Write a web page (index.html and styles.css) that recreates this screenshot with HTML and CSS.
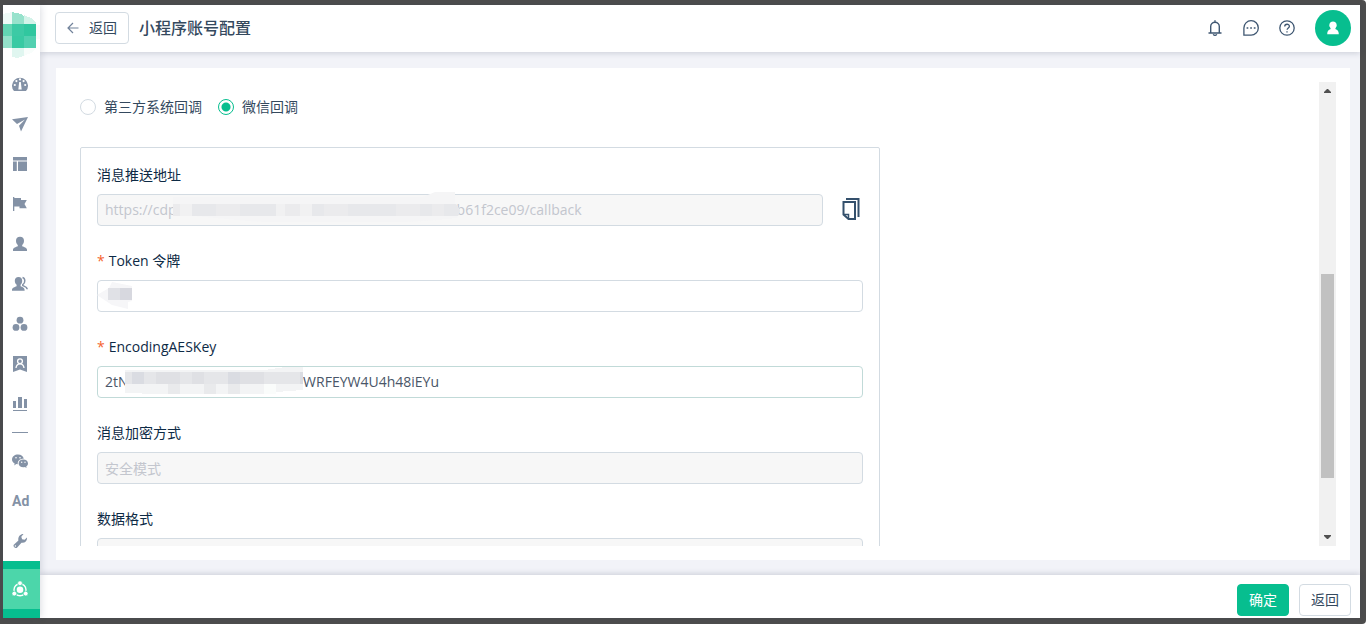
FILE: index.html
```
<!DOCTYPE html>
<html lang="zh-CN">
<head>
<meta charset="utf-8">
<meta name="viewport" content="width=device-width, initial-scale=1">
<title>小程序账号配置</title>
<link rel="stylesheet" href="styles.css">
</head>
<body>
<div class="app">
  <nav class="sidebar" aria-label="主导航">
    <a class="logo" href="#" aria-label="首页">
      <svg width="37" height="48" viewBox="0 0 37 48" shape-rendering="crispEdges">
        <path fill="#fafafa" d="M33 14h4v14h-4z"/>
        <path fill="#effaf7" d="M0 3L9 1v12H0z"/><path fill="#97e2cc" d="M9 1l9 2 3 2v8H9z"/><path fill="#d3f3e9" d="M21 4l7 3 5 4v2H21z"/>
        <path fill="#63d5b3" d="M0 13h9v12H0z"/><path fill="#3ccaa5" d="M9 13h12v12H9z"/><path fill="#30c79f" d="M21 13h12v12H21z"/>
        <path fill="#94e1ca" d="M0 25h9v12H0z"/><path fill="#38caa3" d="M9 25h12v12H9z"/><path fill="#52d0b0" d="M21 25h12v12H21z"/>
        <path fill="#e0f6f0" d="M9 37h12v8l-7 2-5-1z"/><path fill="#f8fdfb" d="M21 37h12l-5 5-7 3z"/>
      </svg>
    </a>
    <a class="nav-item" href="#" aria-label="仪表盘"><svg class="icon" viewBox="0 0 16 16"><path fill="currentColor" d="M2 15A8 8 0 1 1 14 15z"/><g fill="#fff"><path d="M7.2 6h1.6l.9 7.5H6.3z"/><circle cx="8" cy="3.4" r="1.1"/><circle cx="4.4" cy="5.1" r="1.1"/><circle cx="11.6" cy="5.1" r="1.1"/><circle cx="2.8" cy="9" r="1.1"/><circle cx="13.2" cy="9" r="1.1"/></g></svg></a>
    <a class="nav-item" href="#" aria-label="触达"><svg class="icon" viewBox="0 0 16 16"><path fill="currentColor" d="M0 3.200L16 1 9 15.400 7 9.700 13 3.600 5 8.100z"/></svg></a>
    <a class="nav-item" href="#" aria-label="页面"><svg class="icon" viewBox="0 0 16 16"><path fill="currentColor" d="M1 1h14v3.400H1zM1 5.600h3.800V15H1zM6 5.600h9V15H6z"/></svg></a>
    <a class="nav-item" href="#" aria-label="活动"><svg class="icon" viewBox="0 0 16 16"><path fill="currentColor" d="M1 1h1.300v1H9v2h5.800l-2.300 4 2.300 4.200H7.500v-1.800H2.300V15H1z"/></svg></a>
    <a class="nav-item" href="#" aria-label="用户"><svg class="icon" viewBox="0 0 16 16"><path fill="currentColor" d="M8 .8c2.500 0 4 1.600 4 4 0 2-.8 3.500-1.800 4.200v1.300c1.800.8 4.800 1.400 4.800 3.400V15H1v-1.300c0-2 3-2.600 4.800-3.400V9C4.800 8.300 4 6.800 4 4.800c0-2.400 1.500-4 4-4z"/></svg></a>
    <a class="nav-item" href="#" aria-label="用户分群"><svg class="icon" viewBox="0 0 16 16"><path fill="currentColor" d="M6.500 1C9 1 10.200 2.600 10.200 4.800c0 1.900-.7 3.200-1.600 4v1.500c1.700.8 4 1.400 4 3.400v1H0v-1c0-2 2.900-2.600 4.600-3.400V8.800C3.600 8 2.800 6.700 2.800 4.800 2.800 2.600 4.200 1 6.500 1z"/><path fill="none" stroke="currentColor" stroke-width="1.500" d="M10.500 1.500c3 .8 3 5.600.3 7.100v1c2.400 1 4.400 1.600 4.400 3.600"/></svg></a>
    <a class="nav-item" href="#" aria-label="产品"><svg class="icon" viewBox="0 0 16 16"><g fill="currentColor"><circle cx="8" cy="4.200" r="3.400"/><circle cx="4" cy="11.400" r="3.400"/><circle cx="12" cy="11.400" r="3.400"/></g></svg></a>
    <a class="nav-item" href="#" aria-label="会员"><svg class="icon" viewBox="0 0 16 16"><path fill="currentColor" d="M1 0h14v16L8 13.500 1 16z"/><circle cx="8" cy="5.200" r="2.400" fill="none" stroke="#fff" stroke-width="1.300"/><path fill="none" stroke="#fff" stroke-width="1.300" d="M4 12c.3-2.800 1.700-4.200 4-4.200s3.700 1.400 4 4.200"/></svg></a>
    <a class="nav-item" href="#" aria-label="分析"><svg class="icon" viewBox="0 0 16 16"><path fill="currentColor" d="M1 5h3v7H1zM6 1h4v11H6zM12 3h3v9h-3zM1 14h14v1H1z"/></svg></a>
    <hr class="nav-divider">
    <a class="nav-item" href="#" aria-label="微信"><svg class="icon" viewBox="0 0 16 16"><path fill="currentColor" d="M6 1.500c3.200 0 5.400 1.800 5.700 4.200C8 5.500 5.700 7.700 5.700 10.500c0 .3 0 .5.100.8l-1.500-.2-2.100 1.300.5-2C1 9.400 0 8 0 6.400 0 3.600 2.700 1.500 6 1.500z"/><path fill="currentColor" d="M11.300 6.500c2.600 0 4.700 1.700 4.700 3.900 0 1.300-.8 2.400-1.800 3.100l.4 1.500-1.700-.9c-3.300.8-6.300-1-6.300-3.700 0-2.200 2.100-3.900 4.700-3.900z"/><g fill="#fff"><circle cx="4" cy="4.800" r=".8"/><circle cx="8" cy="4.800" r=".8"/><circle cx="9.700" cy="9.300" r=".7"/><circle cx="13" cy="9.300" r=".7"/></g></svg></a>
    <a class="nav-item nav-item-text" href="#">Ad</a>
    <a class="nav-item" href="#" aria-label="工具"><svg class="icon" viewBox="0 0 16 16"><path fill="currentColor" d="M11.500 1L9.300 3.700l.8 2.500 2.500.6L15 4.400c.5 3.300-2.200 6-5.500 5.300L5.200 14.600c-1.700 1.500-4.700-.7-3.400-2.800L6.400 7.600C5.600 3.800 8.500.7 11.500 1z"/><circle cx="3.400" cy="13" r=".7" fill="#fff"/></svg></a>
    <div class="nav-current">
      <a class="nav-item" href="#" aria-current="page" aria-label="配置"><svg class="icon" viewBox="0 0 16 16"><circle cx="8" cy="8.800" r="6" fill="none" stroke="currentColor" stroke-width="1.400"/><circle cx="8" cy="8.800" r="3.300" fill="currentColor"/><g fill="currentColor" stroke="#4cd6aa" stroke-width=".8"><circle cx="8" cy="2.200" r="2.400"/><circle cx="2.300" cy="12.600" r="2.400"/><circle cx="13.700" cy="12.600" r="2.400"/></g></svg></a>
    </div>
  </nav>

  <div class="workspace">
    <header class="topbar">
      <button class="btn btn-back" type="button"><svg width="12" height="12" viewBox="0 0 12 12" fill="none" stroke="#71829a" stroke-width="1.200"><path d="M11.500 6H1M6 1L1 6l5 5"/></svg>返回</button>
      <h1 class="title">小程序账号配置</h1>
      <div class="tools">
        <button class="icon-btn" type="button" aria-label="通知"><svg class="icon" viewBox="0 0 16 16" fill="none" stroke="currentColor" stroke-width="1.400"><path d="M3.700 12.500V6.500a4.300 4.300 0 0 1 8.600 0v6M1.500 13h13M8 .3v2M6.300 14.200c.5 1.500 2.900 1.500 3.400 0"/></svg></button>
        <button class="icon-btn" type="button" aria-label="消息"><svg class="icon" viewBox="0 0 16 16"><path fill="none" stroke="currentColor" stroke-width="1.300" d="M.9 15.100V8A7.200 7.200 0 1 1 8 15.100z"/><path fill="currentColor" d="M3.600 7.200h1.700v1.600H3.600zM7.200 7.200h1.700v1.600H7.200zM10.800 7.200h1.700v1.600h-1.700z"/></svg></button>
        <button class="icon-btn" type="button" aria-label="帮助"><svg class="icon" viewBox="0 0 16 16" fill="none" stroke="currentColor" stroke-width="1.300"><circle cx="8" cy="8" r="7.200"/><path d="M5.700 6.500c0-3 4.700-2.900 4.700-.2 0 1.700-2.300 1.700-2.300 3.500M8 11.200v1.300"/></svg></button>
        <button class="avatar" type="button" aria-label="账户"><svg width="12" height="14" viewBox="0 0 12 14"><path fill="#fff" d="M6 .5a3.700 3.700 0 0 1 2.600 6.400l-.3 1.200c2.300.8 3.500 2.400 3.500 5.100H.2c0-2.700 1.200-4.300 3.500-5.100l-.3-1.200A3.700 3.700 0 0 1 6 .5z"/></svg></button>
      </div>
    </header>

    <main class="content">
      <section class="card">
        <form class="scroll-view" id="config">
          <div class="radio-row">
            <label class="radio"><input type="radio" name="callback">第三方系统回调</label>
            <label class="radio"><input type="radio" name="callback" checked>微信回调</label>
          </div>
          <div class="panel">
            <div class="field">
              <label for="push-url">消息推送地址</label>
              <div class="input-row">
                <div class="control">
                  <input class="input" id="push-url" type="text" disabled value="https://cdp&nbsp;&nbsp;&nbsp;&nbsp;&nbsp;&nbsp;&nbsp;&nbsp;&nbsp;&nbsp;&nbsp;&nbsp;&nbsp;&nbsp;&nbsp;&nbsp;&nbsp;&nbsp;&nbsp;&nbsp;&nbsp;&nbsp;&nbsp;&nbsp;&nbsp;&nbsp;&nbsp;&nbsp;&nbsp;&nbsp;&nbsp;&nbsp;&nbsp;&nbsp;&nbsp;&nbsp;&nbsp;&nbsp;&nbsp;&nbsp;&nbsp;&nbsp;&nbsp;&nbsp;&nbsp;&nbsp;&nbsp;&nbsp;&nbsp;&nbsp;&nbsp;&nbsp;&nbsp;&nbsp;&nbsp;&nbsp;&nbsp;&nbsp;&nbsp;&nbsp;&nbsp;&nbsp;&nbsp;&nbsp;&nbsp;&nbsp;&nbsp;&nbsp;&nbsp;&nbsp;&nbsp;&nbsp;&nbsp;&nbsp;&nbsp;&nbsp;&nbsp;b61f2ce09/callback">
                  <svg class="mask mask-url" width="288" height="36" viewBox="0 0 288 36" aria-hidden="true">
                    <path fill="#f5f5f6" d="M0 5h250l12-5h20v12l5 6-3 8-20 2-30 2H90L0 22z"/>
                    <path fill="#ebebed" d="M0 12h283l4 6-2 6H0z"/>
                    <path fill="#e7e8eb" d="M19 12h24v12H19zM67 12h36v12H67zM139 12h12v12h-12zM175 12h48v12h-48zM247 12h12v12h-12zM271 12h12l4 7-2 5h-14z"/>
                    <path fill="#f1f1f2" d="M7 12h12v12H7zM103 12h9v12h-9zM127 12h12v12h-12z"/>
                  </svg>
                </div>
                <button class="copy-btn" type="button" aria-label="复制"><svg width="20" height="24" viewBox="0 0 20 24" fill="none" stroke="#34506c" stroke-width="2"><path d="M5 1h12.500v18"/><path d="M2.500 4h11.500v17H7.500L2.500 16.500z"/><path stroke-width="1.500" d="M3 16.500h4.500V21"/></svg></button>
              </div>
            </div>
            <div class="field">
              <label class="required" for="token">Token 令牌</label>
              <div class="control">
                <input class="input" id="token" type="text">
                <svg class="mask mask-token" width="38" height="30" viewBox="0 0 38 30" aria-hidden="true"><path fill="#f6f6f8" d="M0 14L12 7l3-6 20 4v15l-4 1v7l-16-4z"/><path fill="#e0e1e6" d="M11 7h12v12H11z"/><path fill="#d7d8df" d="M23 7h12v12H23z"/></svg>
              </div>
            </div>
            <div class="field">
              <label class="required" for="aes-key">EncodingAESKey</label>
              <div class="control">
                <input class="input input-hover" id="aes-key" type="text" value="2tN&nbsp;&nbsp;&nbsp;&nbsp;&nbsp;&nbsp;&nbsp;&nbsp;&nbsp;&nbsp;&nbsp;&nbsp;&nbsp;&nbsp;&nbsp;&nbsp;&nbsp;&nbsp;&nbsp;&nbsp;&nbsp;&nbsp;&nbsp;&nbsp;&nbsp;&nbsp;&nbsp;&nbsp;&nbsp;&nbsp;&nbsp;&nbsp;&nbsp;&nbsp;&nbsp;&nbsp;&nbsp;&nbsp;&nbsp;&nbsp;&nbsp;&nbsp;&nbsp;&nbsp;&nbsp;&nbsp;&nbsp;&nbsp;WRFEYW4U4h48iEYu">
                <svg class="mask mask-key" width="178" height="28" viewBox="0 0 178 28" aria-hidden="true" shape-rendering="crispEdges">
                  <path fill="#f3f4f5" d="M0 3h140l20-3h18v23l-27 2-12 2H17V26H0z"/>
                  <path fill="#e5e6e9" d="M0 5h178v12H0z"/>
                  <path fill="#dadce2" d="M7 5h12v12H7zM103 5h12v12h-12zM175 5h3v12h-3z"/>
                  <path fill="#dfe0e4" d="M31 5h24v12H31zM67 5h12v12H67zM115 5h24v12h-24z"/>
                  <path fill="#e9eaec" d="M43 17h12v10H43zM79 17h12v10H79zM103 17h12v10h-12z"/>
                  <path fill="#fafcfb" d="M139 17h12v10h-12z"/>
                </svg>
              </div>
            </div>
            <div class="field">
              <label for="mode">消息加密方式</label>
              <input class="input" id="mode" type="text" disabled value="安全模式">
            </div>
            <div class="field">
              <label for="format">数据格式</label>
              <input class="input" id="format" type="text" disabled>
            </div>
          </div>
        </form>
        <div class="scrollbar" aria-hidden="true">
          <svg width="17" height="17" viewBox="0 0 17 17"><path fill="#505050" d="M5 11h7v-1L9 7H8l-3 3z"/></svg>
          <div class="track"><div class="thumb"></div></div>
          <svg width="17" height="17" viewBox="0 0 17 17"><path fill="#505050" d="M5 6h7v1l-3 3H8L5 7z"/></svg>
        </div>
      </section>
    </main>

    <footer class="actions">
      <button class="btn btn-primary" type="submit" form="config">确定</button>
      <button class="btn" type="button">返回</button>
    </footer>
  </div>
</div>
</body>
</html>
```
FILE: styles.css
```
* {
  box-sizing: border-box;
}

html {
  background: #fff;
}

body {
  margin: 0;
  height: 100vh;
  padding: 5px 6px 6px 3px;
  background: #4d4d4d;
  border-radius: 0 4px 4px 0;
  color: #34495e;
  font: 14px/22px "Open Sans", "Noto Sans CJK SC", sans-serif;
}

button,
input {
  font: inherit;
  color: inherit;
}

button {
  cursor: pointer;
}

.app {
  display: flex;
  height: 100%;
  background: #f2f3f8;
}

.icon {
  display: block;
  width: 16px;
  height: 16px;
}

/* Sidebar */
.sidebar {
  position: relative;
  z-index: 2;
  display: flex;
  flex: none;
  flex-direction: column;
  width: 37px;
  background: #fff;
  box-shadow: 0 0 8px rgba(40, 50, 80, 0.2);
}

.logo {
  height: 59px;
  padding-top: 6px;
}

.logo svg {
  display: block;
}

.nav-item {
  display: flex;
  align-items: center;
  height: 40px;
  padding-left: 9px;
  color: #8492a6;
  text-decoration: none;
}

.nav-item-text {
  font: bold 14px/22px Roboto, sans-serif;
}

.nav-divider {
  width: 16px;
  height: 1px;
  margin: 8px 0 8px 9px;
  border: 0;
  background: #8492a6;
}

.nav-current {
  flex: 1;
  padding: 8px 0;
  background: #07be8f;
}

.nav-current .nav-item {
  background: #4cd6aa;
  color: #fff;
}

/* Top bar */
.workspace {
  display: flex;
  flex: 1;
  flex-direction: column;
  min-width: 0;
}

.topbar {
  position: relative;
  z-index: 1;
  display: flex;
  align-items: center;
  gap: 10px;
  height: 47px;
  padding: 0 9px 1px 15px;
  background: #fff;
  box-shadow: 0 1px 6px rgba(40, 50, 80, 0.2);
}

.btn {
  display: flex;
  align-items: center;
  justify-content: center;
  height: 32px;
  padding: 0 11px;
  border: 1px solid #d3dbe2;
  border-radius: 4px;
  background: #fff;
}

.btn-back {
  gap: 10px;
}

.btn-primary {
  border-color: #07be8f;
  background: #07be8f;
  color: #fff;
}

.title {
  margin: 0;
  font-size: 16px;
  font-weight: 500;
}

.tools {
  display: flex;
  align-items: center;
  gap: 20px;
  margin-left: auto;
}

.icon-btn,
.copy-btn {
  padding: 0;
  border: 0;
  background: none;
  color: #3f5772;
}

.avatar {
  display: flex;
  align-items: center;
  justify-content: center;
  width: 36px;
  height: 36px;
  padding: 0;
  border: 0;
  border-radius: 50%;
  background: #07be8f;
}

/* Content */
.content {
  display: flex;
  flex: 1;
  min-height: 0;
  padding: 16px 10px 15px 16px;
}

.card {
  display: flex;
  flex: 1;
  min-width: 0;
  padding: 14px 14px 14px 24px;
  background: #fff;
}

.scroll-view {
  flex: 1;
  overflow: hidden;
}

.radio-row {
  display: flex;
  gap: 16px;
  padding: 14px 0 29px;
}

.radio {
  display: flex;
  align-items: center;
  gap: 8px;
}

.radio input {
  appearance: none;
  width: 16px;
  height: 16px;
  margin: 0;
  border: 1px solid #d3dbe2;
  border-radius: 50%;
  background: #fff;
}

.radio input:checked {
  border-color: #07be8f;
  background: radial-gradient(circle, #07be8f 4px, #fff 5px);
}

.panel {
  display: flex;
  flex-direction: column;
  gap: 24px;
  max-width: 800px;
  padding: 16px;
  border: 1px solid #d3dbe2;
  border-radius: 2px;
}

.field {
  display: flex;
  flex-direction: column;
  gap: 8px;
  color: #0d2a45;
}

.required::before {
  content: "*";
  margin-right: 4px;
  color: #f5622d;
}

.input-row {
  display: flex;
  align-items: center;
  gap: 16px;
}

.control {
  position: relative;
  flex: 1;
}

.input {
  display: block;
  width: 100%;
  height: 32px;
  padding: 0 7px 1px;
  border: 1px solid #d3dbe2;
  border-radius: 4px;
  background: #fff;
  color: #4a5668;
}

.input:disabled {
  background: #f7f7f7;
  color: #c3c6ce;
}

.input-hover {
  border-color: #c1dad8;
}

.copy-btn {
  display: flex;
  justify-content: center;
  width: 24px;
}

/* Redaction blocks lie over the field values */
.mask {
  position: absolute;
}

.mask-url {
  top: -2px;
  left: 76px;
}

.mask-token {
  top: 1px;
  left: 0;
}

.mask-key {
  top: 1px;
  left: 28px;
}

/* Scrollbar */
.scrollbar {
  display: flex;
  flex: none;
  flex-direction: column;
  width: 17px;
  background: #f1f1f1;
}

.track {
  display: grid;
  flex: 1;
  grid-template-rows: 175fr 204fr 51fr;
  padding: 0 2px;
}

.thumb {
  grid-row: 2;
  background: #c1c1c1;
}

/* Footer */
.actions {
  display: flex;
  justify-content: flex-end;
  gap: 10px;
  padding: 9px 9px 2px;
  background: #fff;
  box-shadow: 0 -1px 6px rgba(40, 50, 80, 0.2);
}
```
